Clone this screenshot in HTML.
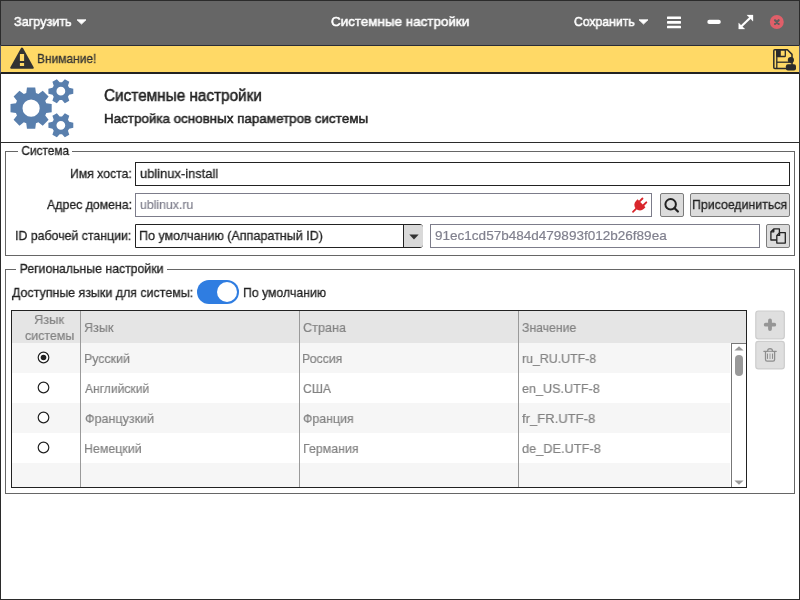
<!DOCTYPE html>
<html lang="ru">
<head>
<meta charset="utf-8">
<title>Системные настройки</title>
<style>
*{box-sizing:border-box;margin:0;padding:0}
html,body{width:800px;height:600px;overflow:hidden;background:#fff}
body{font-family:"Liberation Sans",sans-serif;font-size:13.5px;color:#222;position:relative}
.abs{position:absolute}
.t{position:absolute;white-space:nowrap;line-height:16px;height:16px;will-change:transform;-webkit-text-stroke:0.3px;transform-origin:0 50%}
#win{position:absolute;left:0;top:0;width:800px;height:600px;border:1px solid #2b2b2b}
#titlebar{position:absolute;left:0;top:0;width:800px;height:45px;background:#666;border:1px solid #2b2b2b;border-bottom:none}
#titlebar .t{color:#fff;-webkit-text-stroke:0.55px}
#warn{position:absolute;left:0;top:45px;width:800px;height:29px;background:#ffd966;border-top:1px solid #2a2c36;border-bottom:2px solid #222;border-left:1px solid #565b6c;border-right:1px solid #565b6c}
#hdrline{position:absolute;left:0;top:142px;width:800px;height:1px;background:#2b2b2b}
.fs{position:absolute;border:1px solid #666}
.legend{position:absolute;background:#fff;white-space:nowrap;line-height:16px;height:16px;will-change:transform;-webkit-text-stroke:0.3px;transform-origin:0 50%}
.inp{position:absolute;background:#fff;border:1px solid #222;height:24px}
.inp.dis{border-color:#7c7c8a}
.inp.dis .g{color:#80808e}
.btn{position:absolute;background:#dcdcdc;border:1px solid #7c7c7c;border-radius:2px;height:24px}
.lbl{position:absolute;white-space:nowrap;line-height:16px;height:16px;text-align:right}
.g{color:#828282;-webkit-text-stroke:0.2px}
</style>
</head>
<body>
<div id="win"></div>
<div id="titlebar">
  <div class="t" id="t_load" style="left:13.0px;top:13px;transform:scaleX(0.935)">Загрузить</div>
  <svg class="abs" style="left:75px;top:18px" width="11" height="6" viewBox="0 0 11 6"><path d="M1 0.8 L10 0.8 L5.5 5.1 Z" fill="#fff" stroke="#fff" stroke-width="0.8" stroke-linejoin="round"/></svg>
  <div class="t" id="t_title" style="left:330.0px;top:13px;transform:scaleX(0.993)">Системные настройки</div>
  <div class="t" id="t_save" style="left:573.0px;top:13px;transform:scaleX(0.905)">Сохранить</div>
  <svg class="abs" style="left:637px;top:18px" width="11" height="6" viewBox="0 0 11 6"><path d="M1 0.8 L10 0.8 L5.5 5.1 Z" fill="#fff" stroke="#fff" stroke-width="0.8" stroke-linejoin="round"/></svg>
  <!-- hamburger -->
  <svg class="abs" style="left:666px;top:15px" width="14" height="13" viewBox="0 0 14 13"><rect x="0" y="0.5" width="14" height="2.6" rx="0.6" fill="#fff"/><rect x="0" y="5.1" width="14" height="2.6" rx="0.6" fill="#fff"/><rect x="0" y="9.7" width="14" height="2.6" rx="0.6" fill="#fff"/></svg>
  <!-- minimize -->
  <svg class="abs" style="left:705px;top:17px" width="18" height="8" viewBox="706 18 18 8"><rect x="707.3" y="19.8" width="13.5" height="4.3" rx="2.1" fill="#fff"/></svg>
  <!-- expand -->
  <svg class="abs" style="left:736px;top:13px" width="19" height="18" viewBox="737 14 19 18"><path d="M746.9 15.1 L753 15.1 L753 21.2 Z M738.7 29 L738.7 22.9 L744.8 29 Z" fill="#fff" stroke="#fff" stroke-width="0.3" stroke-linejoin="round"/><path d="M741.4 26.3 L750.3 17.8" stroke="#fff" stroke-width="2.2"/></svg>
  <!-- close -->
  <svg class="abs" style="left:767px;top:12px" width="18" height="18" viewBox="768 13 18 18"><circle cx="776.8" cy="22" r="6.95" fill="#e05f69"/><path d="M775 20.2 L778.7 23.9 M778.7 20.2 L775 23.9" stroke="#5e5e5e" stroke-width="2.1" stroke-linecap="round"/></svg>
</div>

<div id="warn">
  <svg class="abs" style="left:8px;top:0px" width="26" height="26" viewBox="9 46 26 26"><path d="M22 48.6 L32.7 67.7 L11.3 67.7 Z" fill="#333" stroke="#333" stroke-width="2.2" stroke-linejoin="round"/><rect x="19.9" y="54" width="4.2" height="7" fill="#ffd966"/><rect x="19.9" y="63" width="4.2" height="3" fill="#ffd966"/></svg>
  <div class="t" id="t_warn" style="left:36.0px;top:5px;color:#333;transform:scaleX(0.886)">Внимание!</div>
  <!-- save icon -->
  <svg class="abs" style="left:770px;top:1px" width="27" height="25" viewBox="771 47 27 25"><path d="M774.8 49.8 H787.4 L792 54.4 V67.4 Q792 68.4 791 68.4 H774.8 Q773.8 68.4 773.8 67.4 V50.8 Q773.8 49.8 774.8 49.8 Z" fill="none" stroke="#2b2b2b" stroke-width="1.5" stroke-linejoin="round"/><path d="M776.8 49.8 V68.4" stroke="#2b2b2b" stroke-width="1.3"/><rect x="776.8" y="49.8" width="8.5" height="6.7" fill="none" stroke="#2b2b2b" stroke-width="1.3" rx="0.6"/><rect x="776.8" y="49.8" width="4" height="6.7" fill="#2b2b2b"/><path d="M776.8 62.2 H789" stroke="#2b2b2b" stroke-width="1.3"/><circle cx="790.9" cy="60.1" r="3.1" fill="#2b2b2b"/><rect x="785.9" y="64.2" width="10.1" height="6.2" rx="2" fill="#2b2b2b"/></svg>
</div>

<!-- header -->
<svg class="abs" style="left:8px;top:76px" width="70" height="64" viewBox="8 76 70 64"><path fill-rule="evenodd" fill="#597fad" d="M46.24 103.30 L51.69 104.01 L51.69 112.29 L46.24 113.00 L45.24 115.43 L48.59 119.78 L42.73 125.64 L38.38 122.29 L35.95 123.29 L35.24 128.74 L26.96 128.74 L26.25 123.29 L23.82 122.29 L19.47 125.64 L13.61 119.78 L16.96 115.43 L15.96 113.00 L10.51 112.29 L10.51 104.01 L15.96 103.30 L16.96 100.87 L13.61 96.52 L19.47 90.66 L23.82 94.01 L26.25 93.01 L26.96 87.56 L35.24 87.56 L35.95 93.01 L38.38 94.01 L42.73 90.66 L48.59 96.52 L45.24 100.87 Z M39.70 108.15 A8.60 8.60 0 1 0 22.50 108.15 A8.60 8.60 0 1 0 39.70 108.15 Z"/><path fill-rule="evenodd" fill="#597fad" d="M69.17 87.77 L73.29 88.64 L73.29 93.76 L69.17 94.63 L67.98 96.69 L69.28 100.69 L64.86 103.25 L62.04 100.12 L59.66 100.12 L56.84 103.25 L52.42 100.69 L53.72 96.69 L52.53 94.63 L48.41 93.76 L48.41 88.64 L52.53 87.77 L53.72 85.71 L52.42 81.71 L56.84 79.15 L59.66 82.28 L62.04 82.28 L64.86 79.15 L69.28 81.71 L67.98 85.71 Z M65.25 91.20 A4.40 4.40 0 1 0 56.45 91.20 A4.40 4.40 0 1 0 65.25 91.20 Z"/><path fill-rule="evenodd" fill="#597fad" d="M69.17 121.87 L73.29 122.74 L73.29 127.86 L69.17 128.73 L67.98 130.79 L69.28 134.79 L64.86 137.35 L62.04 134.22 L59.66 134.22 L56.84 137.35 L52.42 134.79 L53.72 130.79 L52.53 128.73 L48.41 127.86 L48.41 122.74 L52.53 121.87 L53.72 119.81 L52.42 115.81 L56.84 113.25 L59.66 116.38 L62.04 116.38 L64.86 113.25 L69.28 115.81 L67.98 119.81 Z M65.25 125.30 A4.40 4.40 0 1 0 56.45 125.30 A4.40 4.40 0 1 0 65.25 125.30 Z"/></svg>
<div class="t" id="t_h1" style="left:104.0px;top:87px;font-size:16px;line-height:18px;height:18px;-webkit-text-stroke:0.5px;transform:scaleX(0.957)">Системные настройки</div>
<div class="t" id="t_h2" style="left:104.0px;top:111px;-webkit-text-stroke:0.5px;transform:scaleX(0.992)">Настройка основных параметров системы</div>
<div id="hdrline"></div>

<!-- fieldset 1 -->
<div class="fs" style="left:5px;top:151px;width:790px;height:105px"></div>
<div class="legend" id="t_leg1" style="left:18.0px;top:143px;padding:0 4px;transform:scaleX(0.876)">Система</div>

<div class="t" id="l1" style="left:70.0px;top:166px;transform:scaleX(0.905)">Имя хоста:</div>
<div class="inp" style="left:135px;top:162px;width:655px"><div class="t" id="t_i1" style="left:4.0px;top:3px;transform:scaleX(0.957)">ublinux-install</div></div>

<div class="t" id="l2" style="left:47.0px;top:197px;transform:scaleX(0.912)">Адрес домена:</div>
<div class="inp dis" style="left:135px;top:193px;width:517px"><div class="t g" id="t_i2" style="left:4.0px;top:3px;transform:scaleX(0.910)">ublinux.ru</div>
  <svg class="abs" style="left:494px;top:1px" width="20" height="20" viewBox="630 195 20 20"><g transform="translate(640.3 204.5) rotate(45)" fill="#d9262c"><rect x="-3.65" y="-6.7" width="1.9" height="5.6" rx="0.9"/><rect x="1.75" y="-6.7" width="1.9" height="5.6" rx="0.9"/><path d="M-5.6 -1.7 H5.6 V0.5 A5.6 5.6 0 0 1 -5.6 0.5 Z"/><rect x="-0.9" y="5" width="1.8" height="6.2" rx="0.8"/></g></svg>
</div>
<div class="btn" style="left:660px;top:193px;width:24px">
  <svg class="abs" style="left:1px;top:1px" width="20" height="20" viewBox="662 195 20 20"><circle cx="670.65" cy="204.3" r="5.25" fill="none" stroke="#222" stroke-width="2"/><path d="M674.6 208.2 L677.9 211.5" stroke="#222" stroke-width="2.2" stroke-linecap="round"/></svg>
</div>
<div class="btn" style="left:690px;top:193px;width:100px"><div class="t" id="t_join" style="left:1.0px;top:3px;transform:scaleX(0.914)">Присоединиться</div></div>

<div class="t" id="l3" style="left:15.0px;top:228px;transform:scaleX(0.914)">ID рабочей станции:</div>
<div class="inp" style="left:135px;top:224px;width:288px;border-radius:0 3px 3px 0"><div class="t" id="t_i3" style="left:3.0px;top:3px;transform:scaleX(0.929)">По умолчанию (Аппаратный ID)</div>
  <div class="abs" style="left:267px;top:0;width:20px;height:22px;background:#d9d9d9;border-left:1px solid #222;border-radius:0 2px 2px 0"></div>
  <svg class="abs" style="left:273px;top:9px" width="10" height="6" viewBox="0 0 10 6"><path d="M0.3 0.4 L9.7 0.4 L5 5.6 Z" fill="#333"/></svg>
</div>
<div class="inp dis" style="left:430px;top:224px;width:330px"><div class="t g" id="t_i4" style="left:3.5px;top:3px;transform:scaleX(1.002)">91ec1cd57b484d479893f012b26f89ea</div></div>
<div class="btn" style="left:766px;top:224px;width:24px">
  <svg class="abs" style="left:1px;top:1px" width="20" height="20" viewBox="768 226 20 20"><path d="M773.8 228.9 H779.4 V240 H770.9 V231.8 Z M773.8 228.9 V231.8 H770.9" fill="#dcdcdc" stroke="#222" stroke-width="1.3" stroke-linejoin="round"/><path d="M779.6 232.6 H785.3 V243.1 H776.8 V235.4 Z M779.6 232.6 V235.4 H776.8" fill="#dcdcdc" stroke="#222" stroke-width="1.3" stroke-linejoin="round"/></svg>
</div>

<!-- fieldset 2 -->
<div class="fs" style="left:5px;top:269px;width:790px;height:225px"></div>
<div class="legend" id="t_leg2" style="left:16.0px;top:261px;padding:0 4px;transform:scaleX(0.910)">Региональные настройки</div>
<div class="t" id="t_avail" style="left:12.0px;top:285px;transform:scaleX(0.920)">Доступные языки для системы:</div>
<div class="abs" style="left:197px;top:280px;width:42px;height:24px;border-radius:12px;background:#2f7de1"><div class="abs" style="left:20px;top:2px;width:20px;height:20px;border-radius:10px;background:#fff"></div></div>
<div class="t" id="t_def" style="left:243.0px;top:285px;transform:scaleX(0.909)">По умолчанию</div>

<!-- table -->
<div class="abs" id="tbl" style="left:11px;top:310px;width:736px;height:178px;border:1px solid #222;background:#fff;overflow:hidden">
  <div class="abs" style="left:0;top:0;width:734px;height:32px;background:#e5e5e5"></div>
  <div class="abs" style="left:0;top:32px;width:718px;height:30px;background:#f6f6f6"></div>
  <div class="abs" style="left:0;top:92px;width:718px;height:30px;background:#f6f6f6"></div>
  <div class="abs" style="left:0;top:152px;width:718px;height:24px;background:#f6f6f6"></div>
  <div class="abs" style="left:68px;top:0;width:1px;height:176px;background:#9a9a9a"></div>
  <div class="abs" style="left:287px;top:0;width:1px;height:176px;background:#9a9a9a"></div>
  <div class="abs" style="left:506px;top:0;width:1px;height:176px;background:#9a9a9a"></div>
  <div class="t g" id="t_th0a" style="left:22.0px;top:1px;transform:scaleX(0.949)">Язык</div>
  <div class="t g" id="t_th0b" style="left:13.0px;top:17px;transform:scaleX(0.922)">системы</div>
  <div class="t g" id="t_th1" style="left:72.0px;top:9px;transform:scaleX(0.931)">Язык</div>
  <div class="t g" id="t_th2" style="left:291.0px;top:9px;transform:scaleX(0.935)">Страна</div>
  <div class="t g" id="t_th3" style="left:510.0px;top:9px;transform:scaleX(0.908)">Значение</div>

  <div class="t g" id="t_r1a" style="left:72.0px;top:40px;transform:scaleX(0.918)">Русский</div>
  <div class="t g" id="t_r1b" style="left:290.0px;top:40px;transform:scaleX(0.909)">Россия</div>
  <div class="t g" id="t_r1c" style="left:510.0px;top:40px;transform:scaleX(0.915)">ru_RU.UTF-8</div>
  <div class="t g" id="t_r2a" style="left:73.0px;top:70px;transform:scaleX(0.895)">Английский</div>
  <div class="t g" id="t_r2b" style="left:291.0px;top:70px;transform:scaleX(0.903)">США</div>
  <div class="t g" id="t_r2c" style="left:510.0px;top:70px;transform:scaleX(0.934)">en_US.UTF-8</div>
  <div class="t g" id="t_r3a" style="left:73.0px;top:100px;transform:scaleX(0.929)">Французкий</div>
  <div class="t g" id="t_r3b" style="left:291.0px;top:100px;transform:scaleX(0.915)">Франция</div>
  <div class="t g" id="t_r3c" style="left:510.0px;top:100px;transform:scaleX(0.967)">fr_FR.UTF-8</div>
  <div class="t g" id="t_r4a" style="left:72.0px;top:130px;transform:scaleX(0.918)">Немецкий</div>
  <div class="t g" id="t_r4b" style="left:291.0px;top:130px;transform:scaleX(0.918)">Германия</div>
  <div class="t g" id="t_r4c" style="left:510.0px;top:130px;transform:scaleX(0.946)">de_DE.UTF-8</div>

  <svg class="abs" style="left:24px;top:39px" width="16" height="16" viewBox="0 0 16 16"><circle cx="7.5" cy="7.5" r="5.3" fill="#fff" stroke="#222" stroke-width="1.2"/><circle cx="7.5" cy="7.5" r="2.8" fill="#222"/></svg>
  <svg class="abs" style="left:24px;top:69px" width="16" height="16" viewBox="0 0 16 16"><circle cx="7.5" cy="7.5" r="5.3" fill="#fff" stroke="#222" stroke-width="1.2"/></svg>
  <svg class="abs" style="left:24px;top:99px" width="16" height="16" viewBox="0 0 16 16"><circle cx="7.5" cy="7.5" r="5.3" fill="#fff" stroke="#222" stroke-width="1.2"/></svg>
  <svg class="abs" style="left:24px;top:129px" width="16" height="16" viewBox="0 0 16 16"><circle cx="7.5" cy="7.5" r="5.3" fill="#fff" stroke="#222" stroke-width="1.2"/></svg>

  <!-- scrollbar -->
  <div class="abs" style="left:719px;top:32px;width:16px;height:146px;background:#fff;border-left:1px solid #777;border-top:1px solid #777"></div>
  <svg class="abs" style="left:722px;top:35px" width="10" height="5" viewBox="0 0 10 5"><path d="M5 0.3 L9.6 4.6 L0.4 4.6 Z" fill="#999"/></svg>
  <div class="abs" style="left:723px;top:44px;width:8px;height:20.7px;border-radius:4px;background:#999"></div>
  <svg class="abs" style="left:722px;top:169px" width="10" height="5" viewBox="0 0 10 5"><path d="M0.4 0.4 L9.6 0.4 L5 4.7 Z" fill="#999"/></svg>
</div>

<!-- side buttons -->
<svg class="abs" style="left:754px;top:309px" width="32" height="62" viewBox="754 309 32 62">
  <rect x="755.8" y="311" width="28.5" height="27.8" rx="2.6" fill="#dfdfdf" stroke="#cdcdcd" stroke-width="1.2"/>
  <rect x="755.8" y="341.3" width="28.5" height="27.6" rx="2.6" fill="#dfdfdf" stroke="#cdcdcd" stroke-width="1.2"/>
  <path d="M770 320.4 V329 M765.7 324.7 H774.3" stroke="#969696" stroke-width="3.8" stroke-linecap="round"/>
  <path d="M763.9 351.4 H776.2" stroke="#8e8e8e" stroke-width="1.2" stroke-linecap="round"/>
  <path d="M767.6 351.2 Q767.6 348.6 770 348.6 Q772.5 348.6 772.5 351.2" fill="#cfcfcf" stroke="#8e8e8e" stroke-width="1.2"/>
  <path d="M765.5 351.6 V359.6 Q765.5 361.2 767.1 361.2 H773 Q774.6 361.2 774.6 359.6 V351.6" fill="none" stroke="#8e8e8e" stroke-width="1.3"/>
  <path d="M767.5 353.6 V358.9 M772.5 353.6 V358.9" stroke="#8e8e8e" stroke-width="1"/>
  <path d="M770 353.6 V358.9" stroke="#a2a2a2" stroke-width="1.1"/>
</svg>


</body>
</html>
